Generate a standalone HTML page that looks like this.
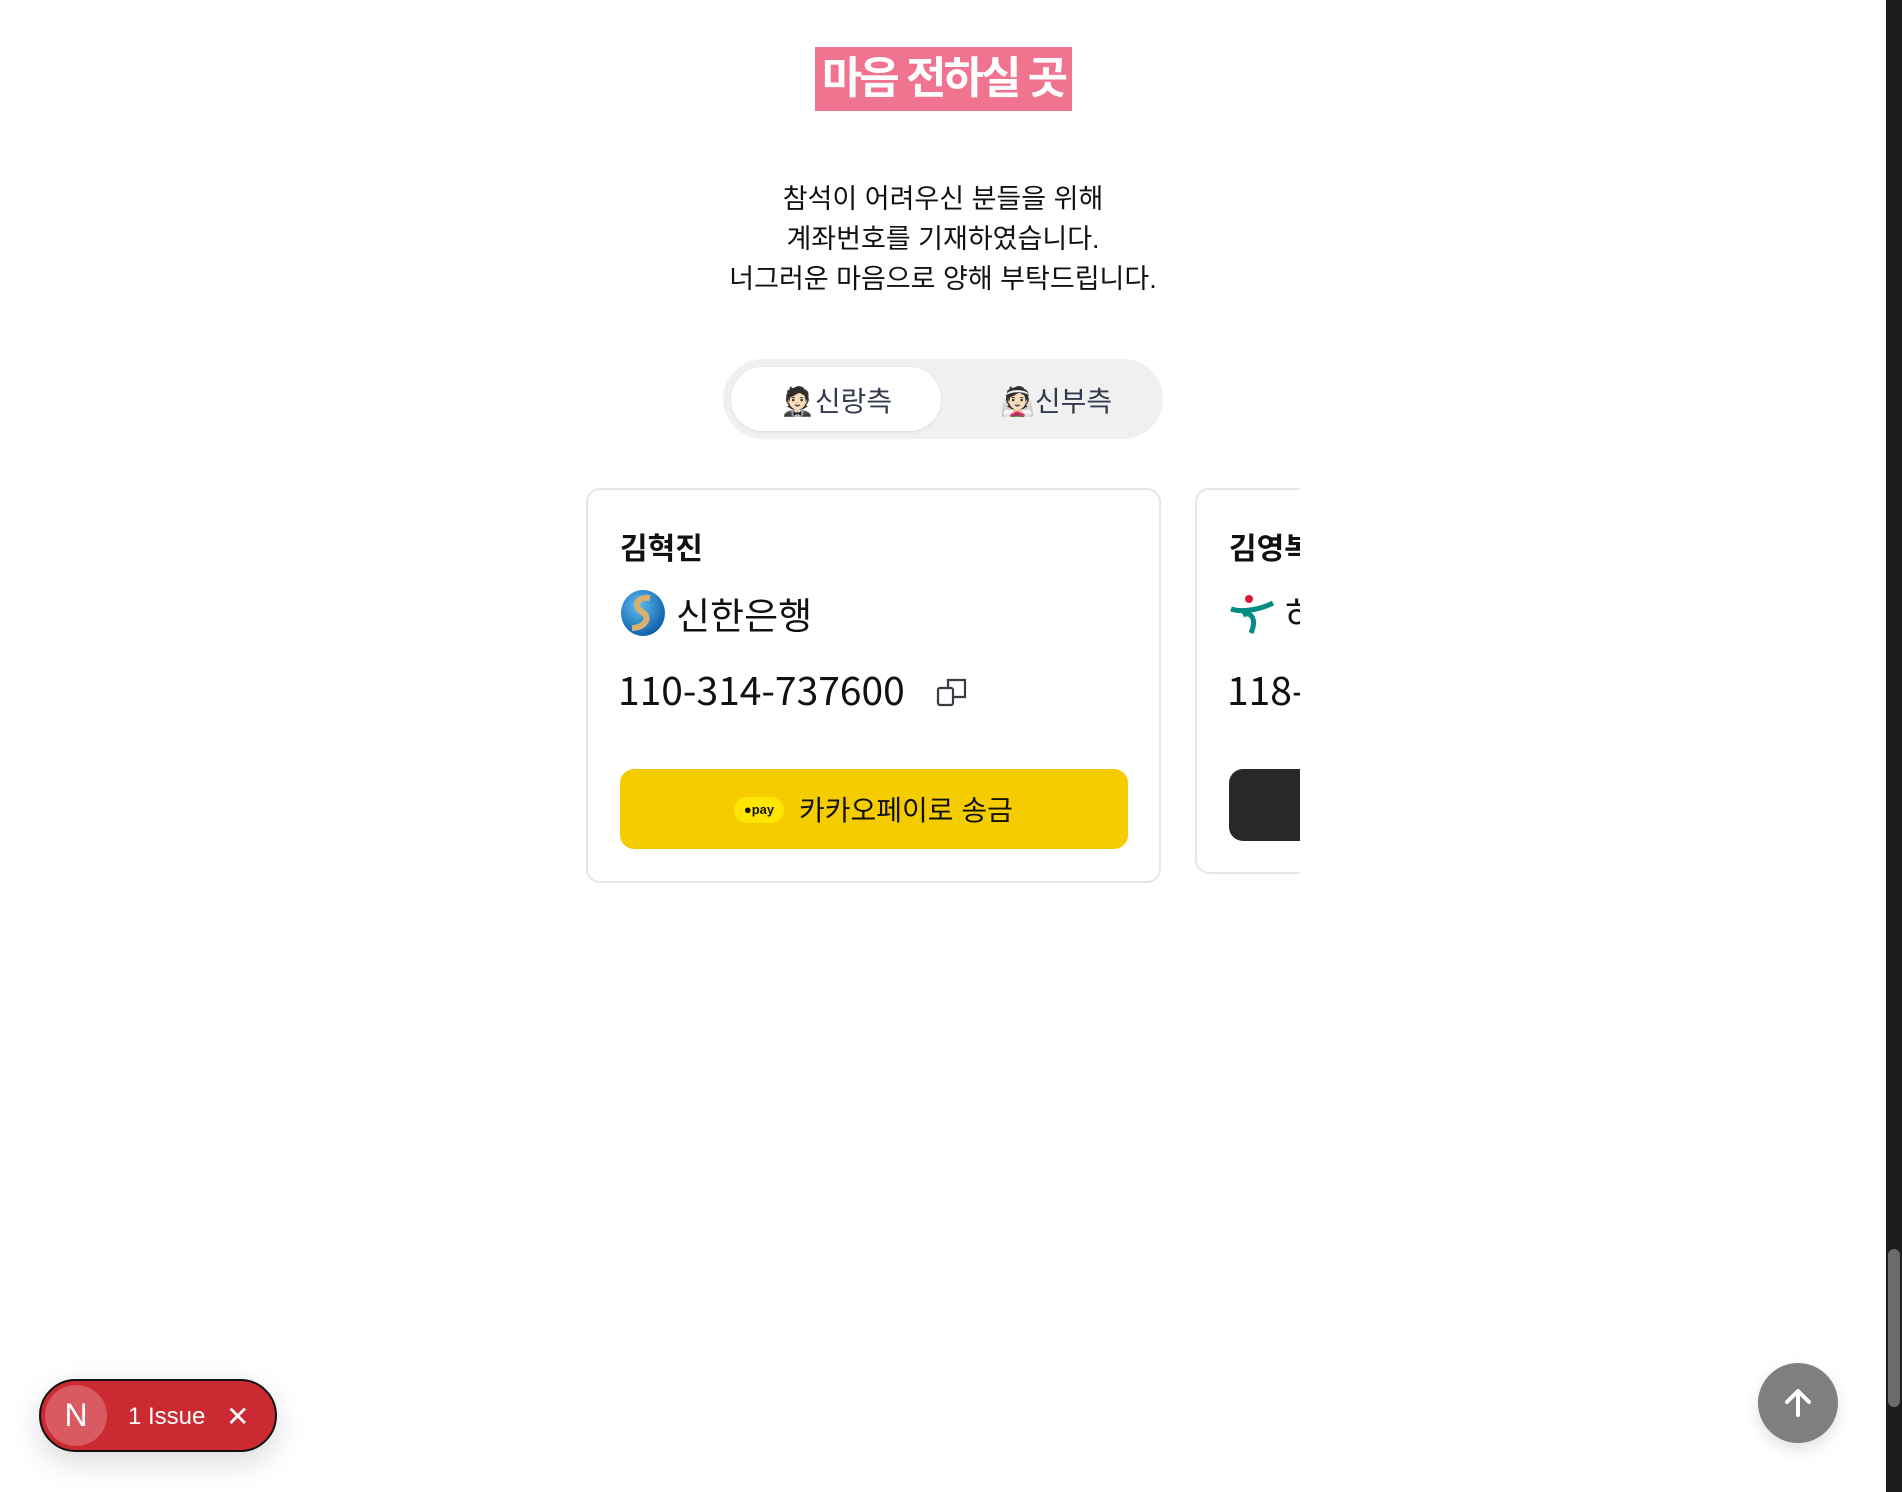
<!DOCTYPE html>
<html><head><meta charset="utf-8"><style>
*{margin:0;padding:0;box-sizing:border-box}
body{width:1902px;height:1492px;background:#fff;position:relative;overflow:hidden;font-family:"Liberation Sans","Noto Sans CJK KR",sans-serif;color:#111}
.abs{position:absolute;white-space:nowrap}
.sb{left:1886px;top:0;width:16px;height:1492px;background:#1c1c1c}
.thumb{left:1888px;top:1249px;width:12px;height:158px;background:#6b6b6b;border-radius:6px}
.title{left:815px;top:47px;width:257px;height:64px;background:#f07490;color:#fff;font-weight:bold;font-size:44px;line-height:64px;text-align:center;letter-spacing:-3px}
.para{left:600px;top:179px;width:686px;text-align:center;font-size:27px;line-height:40px;color:#111}
.tog{left:723px;top:359px;width:440px;height:80px;background:#f0f0f0;border-radius:40px}
.act{left:731px;top:367px;width:210px;height:64px;background:#fff;border-radius:32px;box-shadow:0 1px 3px rgba(0,0,0,.08)}
.tt{font-size:28px;line-height:64px;color:#333a4d;top:370px}
.clip{left:586px;top:480px;width:714px;height:420px;overflow:hidden}
.card{position:absolute;top:8px;border:2px solid #e6e6e6;border-radius:14px;background:#fff}
.name{position:absolute;font-weight:bold;font-size:30px;white-space:nowrap}
.bank{position:absolute;font-size:37px;white-space:nowrap}
.acc{position:absolute;font-size:39px;font-family:"Noto Sans CJK KR",sans-serif;line-height:56px;white-space:nowrap}
.btn{position:absolute;border-radius:14px}
</style></head><body>
<div class="abs title">마음 전하실 곳</div>
<div class="abs para">참석이 어려우신 분들을 위해<br>계좌번호를 기재하였습니다.<br>너그러운 마음으로 양해 부탁드립니다.</div>
<div class="abs tog"></div>
<div class="abs act"></div>
<div class="abs tt" style="left:780px">🤵🏻신랑측</div>
<div class="abs tt" style="left:1000px">👰🏻신부측</div>
<div class="abs clip">
 <div class="card" style="left:0;width:575px;height:395px">
  <div class="name" style="left:32px;top:34px">김혁진</div>
  <svg style="position:absolute;left:32px;top:100px" width="46" height="46" viewBox="0 0 46 46"><defs><radialGradient id="g" cx="40%" cy="35%" r="70%"><stop offset="0" stop-color="#5fc0f0"/><stop offset="1" stop-color="#0a5aa8"/></radialGradient></defs><ellipse cx="23" cy="23" rx="22" ry="23" fill="url(#g)"/><path d="M30 8C18 6 12 16 22 22S24 38 12 38" stroke="#d9b070" stroke-width="6" fill="none"/></svg>
  <div class="bank" style="left:88px;top:96px">신한은행</div>
  <div class="acc" style="left:30px;top:171px">110-314-737600</div>
  <svg style="position:absolute;left:348px;top:186px" width="32" height="32" viewBox="0 0 32 32" fill="none" stroke="#3a3a48" stroke-width="2.2"><rect x="2" y="12" width="15" height="17" rx="2"/><path d="M12 12V4h17v17h-12"/></svg>
  <div class="btn" style="left:32px;top:279px;width:508px;height:80px;background:#f5cc00"></div>
  <div style="position:absolute;left:146px;top:307px;width:50px;height:26px;background:#ffe600;border-radius:13px;font-size:13px;font-weight:bold;line-height:26px;text-align:center">●pay</div>
  <div style="position:absolute;left:211px;top:301px;font-size:28px;line-height:40px;white-space:nowrap">카카오페이로 송금</div>
 </div>
 <div class="card" style="left:609px;width:200px;height:386px">
  <div class="name" style="left:32px;top:34px">김영복</div>
  <svg style="position:absolute;left:32px;top:103px" width="46" height="42" viewBox="0 0 46 42"><circle cx="20" cy="6" r="4" fill="#d7193a"/><path d="M2 16C14 20 32 16 44 10" stroke="#008c7e" stroke-width="5" fill="none"/><path d="M14 22C22 18 28 26 22 40" stroke="#008c7e" stroke-width="5" fill="none"/></svg>
  <div class="bank" style="left:88px;top:96px">하나은행</div>
  <div class="acc" style="left:30px;top:171px">118-</div>
  <div class="btn" style="left:32px;top:279px;width:300px;height:72px;background:#28282a"></div>
 </div>
</div>
<div class="abs" style="left:39px;top:1379px;width:238px;height:73px;border-radius:37px;background:#cc2a33;border:2px solid #111;box-shadow:0 10px 30px rgba(0,0,0,.15)"></div>
<div class="abs" style="left:45px;top:1385px;width:62px;height:61px;border-radius:50%;background:#d95a60;color:#fff;font-size:32px;line-height:61px;text-align:center">N</div>
<div class="abs" style="left:128px;top:1399px;color:#fff;font-size:24px;line-height:36px">1 Issue</div>
<div class="abs" style="left:226px;top:1399px;color:#fff;font-size:28px;line-height:36px">✕</div>
<div class="abs" style="left:1758px;top:1363px;width:80px;height:80px;border-radius:50%;background:#7f7f7f;box-shadow:0 6px 16px rgba(0,0,0,.12)"></div>
<svg class="abs" style="left:1778px;top:1383px" width="40" height="40" viewBox="0 0 40 40" fill="none" stroke="#fff" stroke-width="4" stroke-linecap="round" stroke-linejoin="round"><path d="M20 32V9M9 19l11-11 11 11"/></svg>
<div class="abs sb"></div>
<div class="abs thumb"></div>
</body></html>
